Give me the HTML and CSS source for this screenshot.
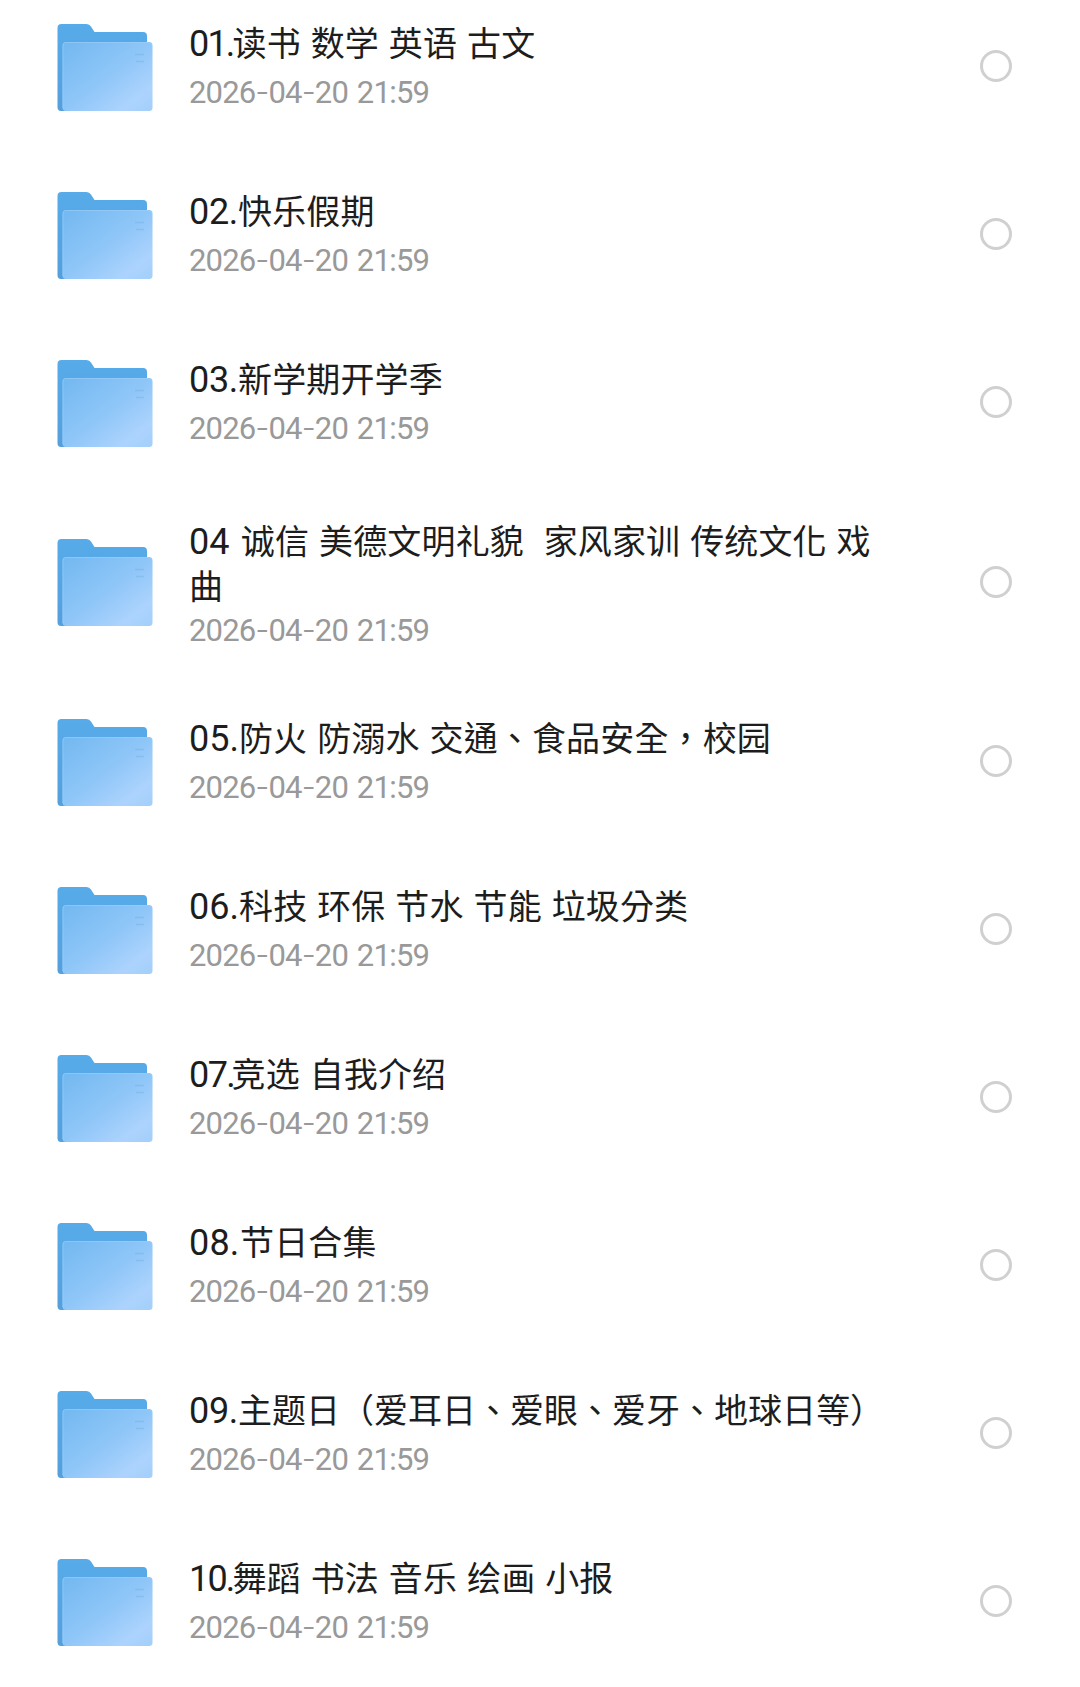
FILE: index.html
```html
<!DOCTYPE html>
<html lang="zh-TW">
<head>
<meta charset="utf-8">
<title>文件夹</title>
<link rel="stylesheet" href="styles.css">
</head>
<body>
<svg class="defs" width="0" height="0" aria-hidden="true">
  <defs>
    <linearGradient id="back" x1="0" y1="0" x2="0" y2="1"><stop offset="0" stop-color="#57abe9"/><stop offset="1" stop-color="#549fdc"/></linearGradient>
    <linearGradient id="front" x1="0" y1="0" x2="1" y2="1"><stop offset="0" stop-color="#72b8f0"/><stop offset=".5" stop-color="#8fc6f8"/><stop offset=".82" stop-color="#acd3fd"/><stop offset="1" stop-color="#a2cffa"/></linearGradient>
    <symbol id="folder" viewBox="0 0 96 88">
      <path fill="url(#back)" d="M4.500 0h25q3 0 4.500 2.500L37.500 8H86q4 0 4 4v75H4q-3.500 0-3.500-4V4Q.5 0 4.500 0z"/>
      <rect x="5.500" y="18" width="90" height="69" rx="3.500" fill="url(#front)"/>
      <path fill="none" stroke="#9dcefa" stroke-opacity=".6" d="M6 84V21q0-2.500 3-2.500h82q3.500 0 3.500 3"/>
      <path fill="none" stroke="#6caee6" stroke-opacity=".4" stroke-width="1.500" d="M78 30.500h9M79 37.500h8"/>
    </symbol>
  </defs>
</svg>
<ul class="list">
  <li class="row"><svg class="folder"><use href="#folder"/></svg><div class="info"><div class="name"><span class="num num-one">01.</span>读书 数学 英语 古文</div><div class="date">2026<i>-</i>04<i>-</i>20 2<b>1</b>:59</div></div><span class="radio"></span></li>
  <li class="row"><svg class="folder"><use href="#folder"/></svg><div class="info"><div class="name"><span class="num">02.</span>快乐假期</div><div class="date">2026<i>-</i>04<i>-</i>20 2<b>1</b>:59</div></div><span class="radio"></span></li>
  <li class="row"><svg class="folder"><use href="#folder"/></svg><div class="info"><div class="name"><span class="num">03.</span>新学期开学季</div><div class="date">2026<i>-</i>04<i>-</i>20 2<b>1</b>:59</div></div><span class="radio"></span></li>
  <li class="row row-tall"><svg class="folder"><use href="#folder"/></svg><div class="info"><div class="name"><span class="num num-plain">04</span> 诚信 美德文明礼貌&nbsp; 家风家训 传统文化 戏曲</div><div class="date">2026<i>-</i>04<i>-</i>20 2<b>1</b>:59</div></div><span class="radio"></span></li>
  <li class="row"><svg class="folder"><use href="#folder"/></svg><div class="info"><div class="name"><span class="num num-wide">05.</span>防火 防溺水 交通、食品安全，校园</div><div class="date">2026<i>-</i>04<i>-</i>20 2<b>1</b>:59</div></div><span class="radio"></span></li>
  <li class="row"><svg class="folder"><use href="#folder"/></svg><div class="info"><div class="name"><span class="num num-wide">06.</span>科技 环保 节水 节能 垃圾分类</div><div class="date">2026<i>-</i>04<i>-</i>20 2<b>1</b>:59</div></div><span class="radio"></span></li>
  <li class="row"><svg class="folder"><use href="#folder"/></svg><div class="info"><div class="name"><span class="num num-seven">07.</span>竞选 自我介绍</div><div class="date">2026<i>-</i>04<i>-</i>20 2<b>1</b>:59</div></div><span class="radio"></span></li>
  <li class="row"><svg class="folder"><use href="#folder"/></svg><div class="info"><div class="name"><span class="num num-eight">08.</span>节日合集</div><div class="date">2026<i>-</i>04<i>-</i>20 2<b>1</b>:59</div></div><span class="radio"></span></li>
  <li class="row"><svg class="folder"><use href="#folder"/></svg><div class="info"><div class="name name-long"><span class="num">09.</span>主题日（爱耳日、爱眼、爱牙、地球日等）</div><div class="date">2026<i>-</i>04<i>-</i>20 2<b>1</b>:59</div></div><span class="radio"></span></li>
  <li class="row"><svg class="folder"><use href="#folder"/></svg><div class="info"><div class="name"><span class="num num-one">10.</span>舞蹈 书法 音乐 绘画 小报</div><div class="date">2026<i>-</i>04<i>-</i>20 2<b>1</b>:59</div></div><span class="radio"></span></li>
</ul>
</body>
</html>
```
FILE: styles.css
```css
* { box-sizing: border-box; }
body {
  margin: 0;
  height: 1687px;
  overflow: hidden;
  background: #fff;
  font-family: "Noto Sans CJK TC", "Noto Sans CJK SC", sans-serif;
}
.defs { display: block; }
.list { list-style: none; margin: -18px 0 0; padding: 0; }
.row {
  display: flex;
  align-items: center;
  height: 168px;
  padding: 0 68px 0 57px;
}
.row-tall { height: 191px; }
.folder { flex: none; width: 96px; height: 88px; margin-top: 3px; }
.info { flex: none; width: 700px; margin-left: 36px; }
.name {
  font-size: 34px;
  line-height: 45px;
  letter-spacing: .15px;
  word-spacing: 2.1px;
  color: #1d1d1d;
}
.name-long { white-space: nowrap; letter-spacing: 0; }
.num {
  display: inline-block;
  width: 49px;
  font-family: Roboto, sans-serif;
  font-size: 36px;
  line-height: 40px;
  letter-spacing: -.3px;
}
.num-one { width: 43.5px; letter-spacing: -1.8px; }
.num-seven { width: 42.5px; letter-spacing: -1.6px; }
.num-plain { width: 42px; letter-spacing: 0; }
.num-wide { width: 50px; letter-spacing: 0; }
.num-eight { width: 51px; letter-spacing: .2px; }
.date {
  margin-top: 8.5px;
  font-family: Roboto, sans-serif;
  font-size: 31px;
  line-height: 40px;
  letter-spacing: -.85px;
  word-spacing: 2px;
  color: #999;
}
.row-tall .info { padding-top: 5px; }
.row-tall .date { margin-top: 2.5px; }
.date i { font-family: Inter, sans-serif; font-style: normal; font-weight: 300; }
.date b { font-weight: inherit; letter-spacing: -1.5px; }
.radio {
  flex: none;
  width: 32px;
  height: 32px;
  margin-left: auto;
  border: 3px solid #d0d0d0;
  border-radius: 50%;
}
```
